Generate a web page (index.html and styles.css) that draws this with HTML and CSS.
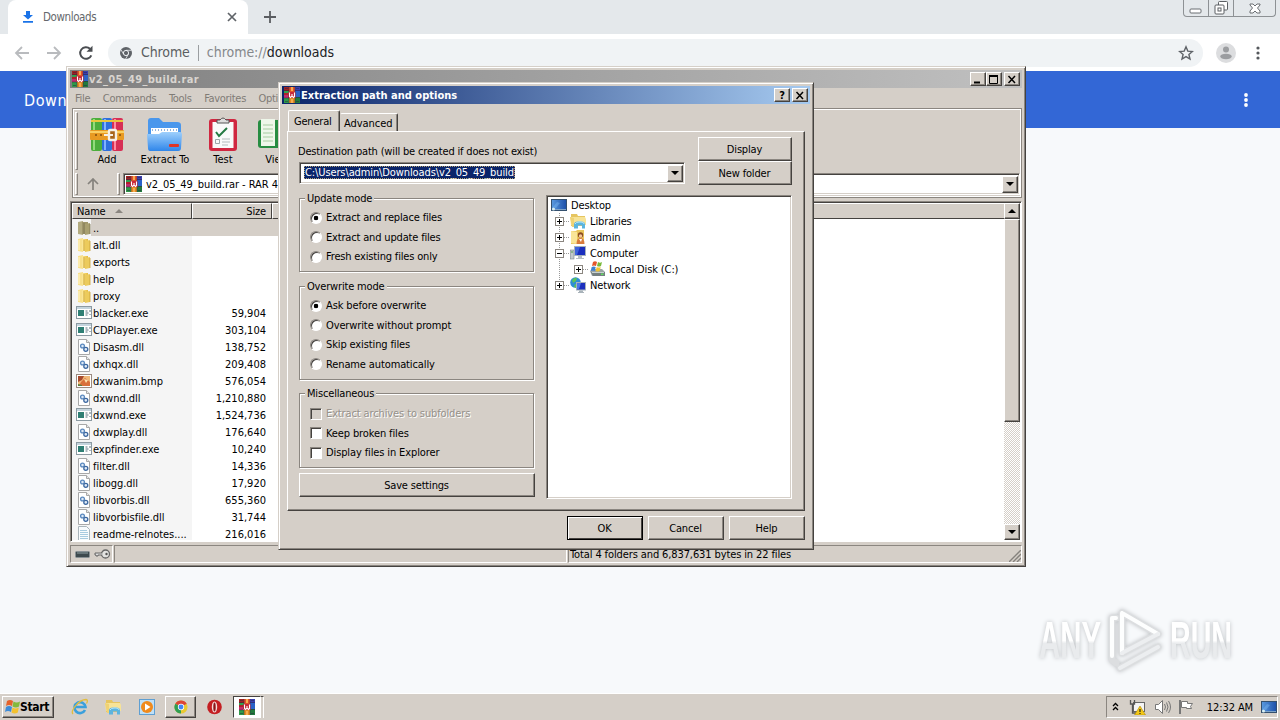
FILE: index.html
```html
<!DOCTYPE html>
<html lang="en">
<head>
<meta charset="utf-8">
<title>Downloads</title>
<link rel="stylesheet" href="styles.css">
</head>
<body>
<svg class="defs" width="0" height="0">
  <defs>
    <linearGradient id="gFold" x1="0" x2="1"><stop offset="0" stop-color="#fbe9a0"/><stop offset=".5" stop-color="#f3d469"/><stop offset="1" stop-color="#e2b73f"/></linearGradient>
    <linearGradient id="gBlue" x1="0" x2="0" y1="0" y2="1"><stop offset="0" stop-color="#9fd0fc"/><stop offset="1" stop-color="#2f86ea"/></linearGradient>
    <linearGradient id="gDesk" x1="0" x2="1"><stop offset="0" stop-color="#5b9be0"/><stop offset="1" stop-color="#1c4fa8"/></linearGradient>
    <linearGradient id="gWm" x1="0" x2="0" y1="0" y2="1"><stop offset=".5" stop-color="#ffffff"/><stop offset=".55" stop-color="#e9ebed"/></linearGradient>
  </defs>
  <symbol id="rar" viewBox="0 0 16 16">
    <rect x="0" y="0" width="5" height="7" fill="#a02222"/><rect x="5" y="0" width="6" height="7" fill="#e0502a"/><rect x="11" y="0" width="5" height="7" fill="#3a3fae"/>
    <rect x="0" y="4" width="5" height="2" fill="#30a050"/><rect x="11" y="4" width="5" height="6" fill="#2a62c8"/>
    <rect x="0" y="6" width="5" height="4" fill="#b0202a"/><rect x="0" y="8" width="4" height="3" fill="#c02a70"/>
    <rect x="0" y="11" width="5" height="5" fill="#2f9a48"/><rect x="5" y="10" width="6" height="6" fill="#e08a20"/><rect x="11" y="10" width="5" height="6" fill="#227a3c"/>
    <path d="M7 0h2v4H7zM7 12h2v4H7z" fill="#f6ac50"/><path d="M1 1.500h3M1 14.500h3M12 1.500h3M12 14.500h3M5 0v16M11 0v16M0 3.500h5M11 3.500h5M0 11h5M11 10.500h5" stroke="#2b2340" stroke-width=".7" opacity=".7"/>
    <rect x="4.500" y="5" width="7" height="6" fill="#c8283a"/><path d="M5.500 5.500v4l1 1 1.500-1.500 1.500 1.500 1-1v-4M8 7v2" stroke="#fff" stroke-width="1.100" fill="none"/>
  </symbol>
  <symbol id="folder" viewBox="0 0 16 16">
    <path d="M2 2l5-1v14l-5-1z" fill="#f8e08a"/><path d="M6 2h6v12H6z" fill="url(#gFold)"/><path d="M9 4l5-1v11l-5 1z" fill="#eccb5c"/><path d="M8 3v11M14 4v10" stroke="#c79f36" stroke-width=".8"/><path d="M3 3v10" stroke="#fff6cf"/>
  </symbol>
  <symbol id="folderdim" viewBox="0 0 16 16">
    <path d="M2 2l5-1v14l-5-1z" fill="#b3ab80"/><path d="M6 2h6v12H6z" fill="#9f966b"/><path d="M9 4l5-1v11l-5 1z" fill="#a9a070"/><path d="M8 3v11M14 4v10" stroke="#7c7550" stroke-width=".8"/>
  </symbol>
  <symbol id="exe" viewBox="0 0 16 16">
    <rect x=".5" y="1.500" width="15" height="12" fill="#fff" stroke="#8c9aa2"/><rect x="1" y="2" width="14" height="2" fill="#c4d4dd"/><rect x="2" y="5" width="6" height="6" fill="#2f7f74"/><path d="M9.500 6h2M9.500 8h3M9.500 10h2M14 5v2M14 9v1" stroke="#59707c"/>
  </symbol>
  <symbol id="dll" viewBox="0 0 16 16">
    <path d="M2.500.5h8l3 3v12h-11z" fill="#fff" stroke="#a8a8a8"/><path d="M10.500.5v3h3" fill="#e8e8e8" stroke="#a8a8a8"/><circle cx="6.500" cy="7" r="1.900" fill="#dfeaf6" stroke="#5a88be" stroke-width="1.300"/><circle cx="9.800" cy="10.300" r="2" fill="#dfeaf6" stroke="#3c68a0" stroke-width="1.300"/>
  </symbol>
  <symbol id="bmp" viewBox="0 0 16 16">
    <rect x=".5" y="1.500" width="15" height="13" fill="#fff" stroke="#9a8a80"/><rect x="2" y="3" width="12" height="10" fill="#f0b878"/><path d="M2 3h6l-2 4-4 2z" fill="#a84a2c"/><path d="M5 9l4-4 5 4v4H3z" fill="#d8703c"/><path d="M8 6l4 1-2 3z" fill="#fde2b0"/><path d="M2 11l4 1v1H2z" fill="#5d7c3a"/>
  </symbol>
  <symbol id="txt" viewBox="0 0 16 16">
    <path d="M2.500.5h8l3 3v12h-11z" fill="#f8fbfd" stroke="#a9b4ba"/><path d="M4 4.500h7M4 6.500h8M4 8.500h8M4 10.500h8M4 12.500h8" stroke="#a8cbe0"/>
  </symbol>
  <symbol id="desktop" viewBox="0 0 16 16">
    <rect x=".5" y="2.500" width="15" height="11" fill="url(#gDesk)" stroke="#34506e"/><path d="M1 12.500h14" stroke="#7fa4c8"/><path d="M2 10l4-5 3 1-4 5z" fill="#76b3ef" opacity=".5"/><circle cx="2.500" cy="12" r="1.500" fill="#d9eff3"/>
  </symbol>
  <symbol id="library" viewBox="0 0 16 16">
    <path d="M1 1h6l1 2h7v10H1z" fill="#e6c560"/><path d="M0 4h15l1 2v6H1z" fill="#f7e396"/><path d="M0 4l2 10h2V5z" fill="#efd274"/><path d="M4 15.500v-4q0-3 4-3h3q4 0 4 3v4h-3v-3H8v3z" fill="#5bb4df"/><path d="M5 11q1-2 4-2h2q3 0 3 2" stroke="#b9e6f7" fill="none"/>
  </symbol>
  <symbol id="user" viewBox="0 0 16 16">
    <path d="M1 2h5l1-1h7v14H1z" fill="#e9c65c"/><path d="M1 2l6 1v12l-6-1z" fill="#f9e598"/><circle cx="10.500" cy="6" r="2.700" fill="#8a4b22"/><circle cx="10.500" cy="7" r="1.700" fill="#f3c79a"/><path d="M6.500 15q0-6 4-6t4 6z" fill="#d87b3c"/><path d="M9 10l2 3 1-3z" fill="#fff"/>
  </symbol>
  <symbol id="computer" viewBox="0 0 16 16">
    <rect x=".5" y="5" width="3.500" height="9" fill="#c3c9cc" stroke="#7b868c" stroke-width=".6"/><path d="M1 7h2" stroke="#4c9e4c"/><rect x="4.500" y="1.500" width="11" height="9" fill="#1a2fbe" stroke="#a6b2bc"/><path d="M5 2h5l-3 8H5z" fill="#4c78e8" opacity=".7"/><path d="M8 11h4v2h2v1H6v-1h2z" fill="#b7bfc5"/>
  </symbol>
  <symbol id="disk" viewBox="0 0 16 16">
    <path d="M1 10l3-2h9l3 3v4H3z" fill="#9aa3a4"/><path d="M2 11h14v4H4z" fill="#747f80"/><path d="M3 11.500h12" stroke="#c7d0d0"/><rect x="12" y="12.500" width="2.500" height="1.500" fill="#61dd61"/><path d="M4 1q2-1.500 4 0L7 5Q5 4 3 5z" fill="#e3562b"/><path d="M9 1q2 1.300 4 0l-1 4q-2 1-4 0z" fill="#79b93b"/><path d="M2.700 6q2-1 4 0l-1 4q-2-1-4 0z" fill="#3d81d0"/><path d="M7.700 6q2 1 4 0l-1 4q-2 1-4 0z" fill="#efc231"/>
  </symbol>
  <symbol id="network" viewBox="0 0 16 16">
    <circle cx="5.500" cy="5.500" r="5.300" fill="#2f8ed4"/><path d="M2 3q3-3 5-2L6 4 3 6zM5 7l3 1-2 3-2-1z" fill="#5cc45a"/><rect x="6.500" y="5.500" width="9" height="7.500" fill="#1a2fbe" stroke="#a6b2bc"/><path d="M7 6h4l-2 6H7z" fill="#4c78e8"/><path d="M9 13.500h4V15h1v1H8v-1h1z" fill="#a9b3ba"/>
  </symbol>
</svg>

<main class="screen">
  <section class="browser">
    <div class="tabstrip">
      <div class="tab">
        <svg width="12" height="14" viewBox="0 0 12 14"><path d="M4 1h4v4h3L6 9.500 1 5h3zM1 11h10v1.800H1z" fill="#1a73e8"/></svg>
        <span class="tab-title">Downloads</span>
        <svg width="10" height="10" viewBox="0 0 10 10"><path d="M1 1l8 8M9 1l-8 8" stroke="#5f6368" stroke-width="1.700"/></svg>
      </div>
      <svg class="newtab" width="12" height="12" viewBox="0 0 12 12"><path d="M6 0v12M0 6h12" stroke="#5a5d61" stroke-width="1.800"/></svg>
      <div class="winctl">
        <span><svg width="14" height="14" viewBox="0 0 14 14"><rect x="1" y="8" width="11" height="4" rx="1" fill="#fff" stroke="#6b6f73"/></svg></span>
        <span><svg width="14" height="14" viewBox="0 0 14 14"><rect x="4.500" y=".5" width="9" height="8.500" rx="1" fill="#fff" stroke="#5b5f63"/><rect x="1" y="4" width="9" height="9" rx="1" fill="#fff" stroke="#5b5f63"/><rect x="4" y="7" width="3" height="3" fill="none" stroke="#5b5f63"/></svg></span>
        <span class="wide"><svg width="14" height="14" viewBox="0 0 14 14"><path d="M2 3h3l2 2 2-2h3v1L9.500 7l2.500 3v2H9L7 10l-2 2H2v-2l2.500-3L2 4z" fill="#fff" stroke="#6b6f73"/></svg></span>
      </div>
    </div>
    <div class="navbar">
      <svg class="nav" width="16" height="14" viewBox="0 0 16 14"><path d="M15 7H2M8 1L2 7l6 6" fill="none" stroke="#b9bbbe" stroke-width="1.800"/></svg>
      <svg class="nav" width="16" height="14" viewBox="0 0 16 14"><path d="M1 7h13M8 1l6 6-6 6" fill="none" stroke="#b9bbbe" stroke-width="1.800"/></svg>
      <svg class="nav" width="16" height="16" viewBox="0 0 16 16"><path d="M13.300 10.300A5.800 5.800 0 1 1 12 3.800" fill="none" stroke="#4a4d51" stroke-width="2"/><path d="M14.500.8v6h-6z" fill="#4a4d51"/></svg>
      <div class="omnibox">
        <svg width="12" height="12" viewBox="0 0 12 12"><circle cx="6" cy="6" r="6" fill="#5f6368"/><circle cx="6" cy="6" r="2.600" fill="#5f6368" stroke="#f0f3f5" stroke-width="1"/><path d="M6 3.300h5.500M3.700 7.300L1 2.800M8.300 7.300L5.600 12" stroke="#f0f3f5" stroke-width=".8"/></svg>
        <span class="site">Chrome</span><i class="bar"></i><span class="url">chrome://<b>downloads</b></span>
        <svg class="star" width="16" height="16" viewBox="0 0 16 16"><path d="M8 1.800l1.800 4.300 4.600.4-3.500 3 1.100 4.500L8 11.600 4 14l1.100-4.500-3.500-3 4.600-.4z" fill="none" stroke="#5f6368" stroke-width="1.400"/></svg>
      </div>
      <svg class="avatar" width="20" height="20" viewBox="0 0 20 20"><circle cx="10" cy="10" r="10" fill="#dcdddf"/><circle cx="10" cy="6.500" r="3" fill="#9b9da0"/><ellipse cx="10" cy="13.500" rx="5.700" ry="2.700" fill="#9b9da0"/></svg>
      <svg width="4" height="14" viewBox="0 0 4 14"><g fill="#55585c"><circle cx="2" cy="2" r="1.600"/><circle cx="2" cy="7" r="1.600"/><circle cx="2" cy="12" r="1.600"/></g></svg>
    </div>
    <div class="pagehead"><span>Downloads</span><svg width="4" height="14" viewBox="0 0 4 14"><g fill="#fff"><circle cx="2" cy="2" r="1.900"/><circle cx="2" cy="7" r="1.900"/><circle cx="2" cy="12" r="1.900"/></g></svg></div>
    <div class="page"></div>
  </section>

  <svg class="watermark" width="220" height="74" viewBox="0 0 220 74">
    <g class="wm-text"><text x="3" y="52" textLength="62" lengthAdjust="spacingAndGlyphs">ANY</text><text x="134" y="52" textLength="62" lengthAdjust="spacingAndGlyphs">RUN</text></g>
    <g fill="none" stroke-linejoin="round" stroke-linecap="round">
      <g stroke="#dcdee0" stroke-width="7"><path d="M80 12h-4v42l4 3M86 7v40L122 28 86 7M84 62l38-21"/></g>
      <g stroke="#fdfefe" stroke-width="4"><path d="M80 12h-4v38M86 7v40M86 7l36 21"/></g>
      <g stroke="#eceef0" stroke-width="4"><path d="M86 47l36-19M84 62l38-21"/></g>
    </g>
  </svg>

  <section class="win rar">
    <div class="title inactive"><svg width="16" height="16"><use href="#rar"/></svg><b>v2_05_49_build.rar</b>
      <div class="caps"><span class="cap"><svg width="10" height="9"><path d="M1 7.500h6" stroke="#000" stroke-width="2"/></svg></span><span class="cap"><svg width="10" height="9"><path d="M.5 0v8.500h8V0M0 1h9" stroke="#000" fill="none"/><path d="M0 1h9" stroke="#000" stroke-width="2"/></svg></span><span class="cap gap"><svg width="10" height="9"><path d="M1.500 1l6.500 7M8 1L1.500 8" stroke="#000" stroke-width="1.500"/></svg></span></div>
    </div>
    <nav class="menu"><span>File</span><span>Commands</span><span>Tools</span><span>Favorites</span><span>Options</span></nav>
    <div class="bars">
      <div class="tools">
        <i class="grip"></i>
        <div class="tool t1"><svg width="36" height="36" viewBox="0 0 36 36"><g><rect x="2" y="2" width="11" height="33" rx="2" fill="#4cae3c"/><rect x="13" y="2" width="10" height="33" rx="2" fill="#2f70dc"/><rect x="23" y="2" width="11" height="33" rx="2" fill="#d72f55"/><path d="M5 3v31" stroke="#92db7c" stroke-width="2"/><path d="M16 3v31" stroke="#7fb2ff" stroke-width="2"/><path d="M26 3v31" stroke="#ff8aa0" stroke-width="2"/><path d="M2 5h11M13 5h10M23 5h11" stroke="#e8c63c" stroke-width="2"/><rect x="1" y="14" width="34" height="10" rx="1" fill="#e89a22"/><path d="M1 16h34" stroke="#f9cf62" stroke-width="2"/><rect x="20" y="14" width="7" height="10" rx="1" fill="#a8641a" stroke="#f4f0e8" stroke-width="2.400"/><path d="M15 19h9" stroke="#f4f0e8" stroke-width="2"/><circle cx="7" cy="19" r="1" fill="#7d4b12"/><circle cx="12" cy="19" r="1" fill="#7d4b12"/><circle cx="31" cy="19" r="1" fill="#7d4b12"/></g></svg><span>Add</span></div>
        <div class="tool t2"><svg width="38" height="36" viewBox="0 0 38 36"><path d="M2 5q0-3 3-3h8l4 4h14q4 0 4 3v12H2z" fill="#4a97ec"/><path d="M5 12h27v12H5z" fill="#fff"/><path d="M6 14h25" stroke="#8fb4e0" stroke-dasharray="1 2" stroke-width="2"/><path d="M1 18h12l3-2h18q2 0 2 2l-1 14q0 3-3 3H4q-2 0-2-3z" fill="url(#gBlue)"/><rect x="23" y="28" width="10" height="3" rx="1" fill="#df3527"/></svg><span>Extract To</span></div>
        <div class="tool t3"><svg width="30" height="36" viewBox="0 0 30 36"><rect x="1" y="3" width="28" height="32" rx="3" fill="#d02740"/><rect x="4.500" y="6" width="21" height="26" fill="#f9fafa"/><path d="M9 7V4h3q3-4 6 0h3v3z" fill="#dedede" stroke="#555"/><path d="M8 16l3 4 8-8" fill="none" stroke="#247a43" stroke-width="2"/><path d="M7.500 23.500h4v4h-4z" fill="none" stroke="#9ca6a8"/><path d="M14 23h8M14 26h8M14 29h6" stroke="#b4bcbe"/></svg><span>Test</span></div>
        <div class="tool t4"><svg width="36" height="36" viewBox="0 0 36 36"><rect x="1" y="4" width="34" height="28" rx="3" fill="#278d42"/><rect x="4" y="3" width="14" height="27" fill="#eef7ea"/><path d="M6 9h10M6 13h10M6 17h10M6 21h10M6 25h10" stroke="#a6cda2"/></svg><span>View</span></div>
      </div>
      <div class="addr">
        <i class="grip"></i>
        <svg class="up" width="14" height="12" viewBox="0 0 14 12"><path d="M7 12V2M2 6l5-5 5 5" fill="none" stroke="#85827d" stroke-width="1.700"/></svg>
        <i class="grip"></i>
        <div class="combo"><svg width="16" height="16"><use href="#rar"/></svg><span>v2_05_49_build.rar - RAR 4.x archive, unpacked size 6,837,631 bytes</span><em class="drop"></em></div>
      </div>
    </div>
    <div class="list">
      <div class="listmain">
        <div class="thead"><span class="c1">Name<i class="asc"></i></span><span class="c2">Size</span><span class="c3"></span></div>
        <div class="rows">
          <div class="row sel"><svg><use href="#folderdim"/></svg><span>..</span><em></em></div>
          <div class="row"><svg><use href="#folder"/></svg><span>alt.dll</span><em></em></div>
          <div class="row"><svg><use href="#folder"/></svg><span>exports</span><em></em></div>
          <div class="row"><svg><use href="#folder"/></svg><span>help</span><em></em></div>
          <div class="row"><svg><use href="#folder"/></svg><span>proxy</span><em></em></div>
          <div class="row"><svg><use href="#exe"/></svg><span>blacker.exe</span><em>59,904</em></div>
          <div class="row"><svg><use href="#exe"/></svg><span>CDPlayer.exe</span><em>303,104</em></div>
          <div class="row"><svg><use href="#dll"/></svg><span>Disasm.dll</span><em>138,752</em></div>
          <div class="row"><svg><use href="#dll"/></svg><span>dxhqx.dll</span><em>209,408</em></div>
          <div class="row"><svg><use href="#bmp"/></svg><span>dxwanim.bmp</span><em>576,054</em></div>
          <div class="row"><svg><use href="#dll"/></svg><span>dxwnd.dll</span><em>1,210,880</em></div>
          <div class="row"><svg><use href="#exe"/></svg><span>dxwnd.exe</span><em>1,524,736</em></div>
          <div class="row"><svg><use href="#dll"/></svg><span>dxwplay.dll</span><em>176,640</em></div>
          <div class="row"><svg><use href="#exe"/></svg><span>expfinder.exe</span><em>10,240</em></div>
          <div class="row"><svg><use href="#dll"/></svg><span>filter.dll</span><em>14,336</em></div>
          <div class="row"><svg><use href="#dll"/></svg><span>libogg.dll</span><em>17,920</em></div>
          <div class="row"><svg><use href="#dll"/></svg><span>libvorbis.dll</span><em>655,360</em></div>
          <div class="row"><svg><use href="#dll"/></svg><span>libvorbisfile.dll</span><em>31,744</em></div>
          <div class="row"><svg><use href="#txt"/></svg><span>readme-relnotes....</span><em>216,016</em></div>
        </div>
      </div>
      <div class="scroll"><i class="sbtn upb"></i><i class="thumb"></i><i class="sbtn downb"></i></div>
    </div>
    <div class="status">
      <div class="s1"><svg width="15" height="7" viewBox="0 0 15 7"><rect x=".5" y=".5" width="14" height="6" rx="1" fill="#3e4a4e" stroke="#8a9296"/><path d="M2 2h11" stroke="#8fa0a4"/></svg><svg width="17" height="10" viewBox="0 0 17 10"><circle cx="11.500" cy="5" r="4" fill="#e3e3e1" stroke="#666" stroke-width="1.300"/><path d="M8 4H1v2h1v1h2V6h4" fill="#ddd" stroke="#666"/><circle cx="12.500" cy="5" r="1.200" fill="#555"/></svg></div>
      <div class="s2"></div>
      <div class="s3"><span>Total 4 folders and 6,837,631 bytes in 22 files</span><svg width="12" height="12" viewBox="0 0 12 12"><path d="M0 12L12 0M4 12l8-8M8 12l4-4" stroke="#85827d" stroke-width="1.400"/></svg></div>
    </div>
  </section>

  <section class="win dialog">
    <div class="title active"><svg width="16" height="16"><use href="#rar"/></svg><b>Extraction path and options</b>
      <div class="caps"><span class="cap qm">?</span><span class="cap gap"><svg width="10" height="9"><path d="M1.500 1l6.500 7M8 1L1.500 8" stroke="#000" stroke-width="1.500"/></svg></span></div>
    </div>
    <div class="tabs"><span class="dtab on">General</span><span class="dtab">Advanced</span></div>
    <div class="panel">
      <div class="dest">
        <div class="destl"><label>Destination path (will be created if does not exist)</label>
          <div class="combo"><span class="hl">C:\Users\admin\Downloads\v2_05_49_build</span><em class="drop"></em></div></div>
        <div class="destr"><span class="btn">Display</span><span class="btn">New folder</span></div>
      </div>
      <div class="cols">
        <div class="left">
          <div class="group g1"><h4>Update mode</h4><p><i class="radio on"></i><span>Extract and replace files</span></p><p><i class="radio"></i><span>Extract and update files</span></p><p><i class="radio"></i><span>Fresh existing files only</span></p></div>
          <div class="group g2"><h4>Overwrite mode</h4><p><i class="radio on"></i><span>Ask before overwrite</span></p><p><i class="radio"></i><span>Overwrite without prompt</span></p><p><i class="radio"></i><span>Skip existing files</span></p><p><i class="radio"></i><span>Rename automatically</span></p></div>
          <div class="group g3"><h4>Miscellaneous</h4><p class="off"><i class="check"></i><span>Extract archives to subfolders</span></p><p><i class="check"></i><span>Keep broken files</span></p><p><i class="check"></i><span>Display files in Explorer</span></p></div>
          <span class="btn save">Save settings</span>
        </div>
        <div class="tree">
          <div class="node root"><svg><use href="#desktop"/></svg><span>Desktop</span></div>
          <div class="node"><i class="pm plus"></i><svg><use href="#library"/></svg><span>Libraries</span></div>
          <div class="node"><i class="pm plus"></i><svg><use href="#user"/></svg><span>admin</span></div>
          <div class="node"><i class="pm"></i><svg><use href="#computer"/></svg><span>Computer</span></div>
          <div class="node sub"><i class="pm plus"></i><svg><use href="#disk"/></svg><span>Local Disk (C:)</span></div>
          <div class="node last"><i class="pm plus"></i><svg><use href="#network"/></svg><span>Network</span></div>
        </div>
      </div>
    </div>
    <div class="foot"><span class="btn def">OK</span><span class="btn">Cancel</span><span class="btn">Help</span></div>
  </section>

  <footer class="taskbar">
    <div class="start"><svg width="17" height="16" viewBox="0 0 17 16"><path d="M3 2q3-2 6 0L8 7Q5 5 2 7z" fill="#e5622b"/><path d="M9.500 2.500q3 2 6.500 0L15 7.500q-3 2-6.500 0z" fill="#83b93c"/><path d="M2 8q3-2 6 0l-1 5q-3-2-6 0z" fill="#3c8bd8"/><path d="M8.500 8.500q3 2 6.300 0l-1 5q-3 2-6.300 0z" fill="#f3c12f"/></svg><b>Start</b></div>
    <svg class="q ie" width="18" height="18" viewBox="0 0 18 18"><path d="M14 12A5.500 5.500 0 1 1 14.500 9H4" fill="none" stroke="#3ba0dc" stroke-width="2.600"/><path d="M2 16C-1 13 8 1.500 15 1.500q2.500.5.500 4" fill="none" stroke="#e2bd3e" stroke-width="1.300"/></svg>
    <svg class="q ex" width="16" height="16" viewBox="0 0 16 16"><use href="#library"/></svg>
    <svg class="q wmp" width="16" height="16" viewBox="0 0 16 16"><rect x=".5" y=".5" width="15" height="15" fill="#bfe0f7" stroke="#5f9fd2"/><circle cx="8" cy="8" r="6" fill="#f08a1c"/><path d="M6 4.500l5.500 3.500L6 11.500z" fill="#fff"/></svg>
    <div class="task"><svg width="14" height="14" viewBox="0 0 16 16"><circle cx="8" cy="8" r="7.500" fill="#e9c931"/><path d="M8 8L1.500 4.200A7.500 7.500 0 0 1 14.500 4.200z" fill="#dc4437"/><path d="M1.500 4.200L8 8v7.500A7.500 7.500 0 0 1 1.500 4.200z" fill="#2f9e52"/><circle cx="8" cy="8" r="3.600" fill="#fff"/><circle cx="8" cy="8" r="2.800" fill="#4285f4"/></svg></div>
    <svg class="q op" width="15" height="16" viewBox="0 0 15 16"><circle cx="7.500" cy="8" r="7.300" fill="#c41e22"/><ellipse cx="7.500" cy="8" rx="2.700" ry="5.500" fill="#f5dcdc"/><ellipse cx="7.500" cy="8" rx="1.200" ry="4.500" fill="#8c1418"/></svg>
    <div class="task down"><svg width="16" height="16"><use href="#rar"/></svg></div><i class="stack"></i>
    <div class="tray">
      <svg width="7" height="10" viewBox="0 0 7 10"><path d="M1 4l2.500-2.500L6 4M1 8l2.500-2.500L6 8" fill="none" stroke="#000" stroke-width="1.300"/></svg>
      <svg class="net" width="17" height="16" viewBox="0 0 17 16"><rect x="4.500" y="3.500" width="11" height="9" fill="#f4f4f4" stroke="#666"/><path d="M1.500 1v4h4V1M3.500 5v9h4" fill="none" stroke="#555" stroke-width="1.300"/><path d="M11 7l5.500 9h-11z" fill="#f4c816" stroke="#b28c08" stroke-width=".6"/><path d="M11 10v3M11 14v1" stroke="#222" stroke-width="1.200"/></svg>
      <svg class="vol" width="17" height="16" viewBox="0 0 17 16"><path d="M1.500 5.500h3l4-4v13l-4-4h-3z" fill="#fff" stroke="#777"/><path d="M10.500 5q2 3 0 6M12.500 3.500q3 4.500 0 9M14.500 2q4 6 0 12" fill="none" stroke="#777"/></svg>
      <svg class="flag" width="16" height="16" viewBox="0 0 16 16"><path d="M2 1v14" stroke="#777" stroke-width="2"/><path d="M3.500 2.500h6v2h5l-2 3 1 2h-5v-1h-5z" fill="#fff" stroke="#777"/></svg>
      <span class="clock">12:32 AM</span>
      <svg width="16" height="16" viewBox="0 0 16 16"><use href="#desktop"/></svg>
    </div>
  </footer>
</main>
</body>
</html>
```
FILE: styles.css
```css
* { box-sizing: border-box; }
body { margin: 0; font: 11px/13px "DejaVu Sans Condensed", "DejaVu Sans", sans-serif; font-stretch: condensed; color: #000; letter-spacing: -.17px; }
i, em { font-style: normal; display: block; flex: none; }
svg { display: block; flex: none; }
span { white-space: nowrap; }
.defs { position: absolute; }
.screen { position: relative; width: 1280px; height: 720px; overflow: hidden; display: flex; flex-direction: column; background: #f7f9fb; }

/* Browser */
.browser { display: flex; flex-direction: column; height: 693px; }
.tabstrip { height: 34px; background: #e4e8eb; display: flex; align-items: flex-start; padding-left: 8px; }
.tab { width: 240px; height: 34px; background: #fff; border-radius: 8px 8px 0 0; display: flex; align-items: center; padding: 0 11px 0 14px; }
.tab-title { flex: 1; margin-left: 9px; font-size: 11.500px; letter-spacing: -.4px; color: #65686c; }
.newtab { margin: 11px 0 0 16px; }
.winctl { margin-left: auto; margin-right: 4px; display: flex; width: 93px; height: 17px; border: 1px solid #8d9194; border-top: 0; border-radius: 0 0 4px 4px; }
.winctl span { width: 25px; display: flex; justify-content: center; align-items: center; border-right: 1px solid #8d9194; }
.winctl .wide { flex: 1; border-right: 0; }
.navbar { height: 37px; background: #fff; display: flex; align-items: center; padding: 0 20px 0 14px; }
.nav { margin-right: 16px; }
.omnibox { width: 1096px; height: 28px; margin-left: -2px; border-radius: 14px; background: #f0f3f5; display: flex; align-items: center; padding: 0 9px 0 12px; font-size: 14px; line-height: 20px; }
.site { margin-left: 9px; padding-bottom: 1px; color: #5b5e61; letter-spacing: -.1px; }
.bar { width: 1px; height: 16px; background: #9b9ea1; margin: 0 8px; }
.url { padding-bottom: 1px; color: #85888b; letter-spacing: -.03px; }
.url b { font-weight: 400; color: #202124; }
.star { margin-left: auto; }
.avatar { margin: 0 20px 0 13px; }
.pagehead { height: 57px; background: #3367d6; color: #fff; display: flex; align-items: center; justify-content: space-between; padding: 1px 32px 0 24px; font-size: 16px; letter-spacing: .6px; }
.page { flex: 1; background: #f7f9fb; }
.watermark { position: absolute; left: 1036px; top: 606px; overflow: visible; filter: drop-shadow(0 0 2px #bdc0c3); }
.wm-text { font: 700 51px "Liberation Sans", sans-serif; letter-spacing: 0; fill: url(#gWm); }

/* Windows */
.win { position: absolute; background: #d5cfc8; border: 1px solid; border-color: #d5cfc8 #45423f #45423f #d5cfc8; box-shadow: inset 1px 1px #fff, inset -1px -1px #8b8680; padding: 3px; display: flex; flex-direction: column; }
.rar { left: 66px; top: 66px; width: 960px; height: 501px; }
.dialog { left: 278px; top: 82px; width: 536px; height: 468px; }
.title { height: 18px; display: flex; align-items: center; padding: 0 2px; color: #fff; flex: none; }
.title b { margin-left: 1px; letter-spacing: .02px; }
.inactive { background: linear-gradient(90deg, #808080, #c0c0c0); }
.inactive b { color: #d9d5d0; letter-spacing: .33px; }
.active { background: linear-gradient(90deg, #0a246a, #a6caf0); }
.caps { margin-left: auto; display: flex; }
.cap { width: 16px; height: 14px; display: flex; align-items: center; justify-content: center; font-weight: 700; color: #000; }
.cap.gap { margin-left: 2px; }
.cap, .btn, .drop, .sbtn, .thumb, .start, .task { background: #d5cfc8; border: 1px solid; border-color: #fff #45423f #45423f #fff; box-shadow: inset -1px -1px #8b8680; }
.btn { display: flex; align-items: center; justify-content: center; height: 24px; padding-right: 1px; }

.menu { height: 20px; display: flex; align-items: center; gap: 12.500px; padding-left: 5px; color: #807b76; letter-spacing: -.3px; flex: none; }
.bars { height: 90px; margin-left: 2px; border: 1px solid #8b8680; box-shadow: inset 1px 1px #fff, inset -1px -1px #fff; flex: none; padding: 3px 1px 3px 2px; }
.grip { width: 3px; border: 1px solid; border-color: #fff #8b8680 #8b8680 #fff; }
.tools { display: flex; height: 60px; }
.tools .grip { height: 58px; }
.tool { display: flex; flex-direction: column; align-items: center; padding-top: 4px; flex: none; }
.tool span { margin-top: 1px; letter-spacing: 0; }
.t1 { width: 58px; }
.t2 { width: 58px; }
.t3 { width: 58px; }
.t4 { width: 50px; }
.t4 svg { margin-left: -4px; }
.addr { display: flex; height: 22px; margin-top: 1px; }
.addr .up { margin: 5px 17px 0 8px; }
.combo { background: #fff; border: 1px solid; border-color: #8b8680 #fff #fff #8b8680; box-shadow: inset 1px 1px #45423f, inset -1px -1px #d5cfc8; display: flex; align-items: center; height: 22px; padding: 2px 1px 2px 2px; }
.addr .combo { flex: 1; margin-left: 3px; }
.addr .combo span { margin: 1px 0 0 4px; flex: 1; letter-spacing: -.05px; }
.drop { width: 16px; height: 17px; position: relative; margin-left: auto; }
.drop::after, .sbtn::after { content: ""; position: absolute; left: 3px; top: 5px; border: 4px solid transparent; border-top-color: #000; border-bottom: 0; }

.list { height: 341px; margin: 3px 0 0; border: 1px solid; border-color: #8b8680 #fff #fff #8b8680; box-shadow: inset 1px 1px #45423f; padding: 1px; display: flex; background: #fff; flex: none; overflow: hidden; }
.listmain { flex: 1; min-width: 0; overflow: hidden; }
.thead { display: flex; height: 16px; background: #d5cfc8; }
.thead span { border: 1px solid; border-color: #fff #45423f #45423f #fff; display: flex; align-items: center; flex: none; }
.thead .c1 { width: 120px; padding-left: 4px; }
.thead .c2 { width: 80px; justify-content: flex-end; padding-right: 5px; }
.thead .c3 { flex: 1; border-right: 0; }
.asc { margin-left: 9px; border: 4px solid transparent; border-bottom-color: #8b8680; border-top: 0; }
.rows { height: 322px; overflow: hidden; background: linear-gradient(90deg, #f5f5f5 120px, #fff 120px); }
.row { height: 17px; width: 220px; display: flex; align-items: center; padding-left: 4px; }
.row svg { width: 16px; height: 16px; }
.row span { width: 99px; margin-left: 1px; padding-top: 1px; letter-spacing: -.03px; }
.row em { width: 74px; padding-top: 1px; text-align: right; letter-spacing: 0; }
.row.sel { background: linear-gradient(90deg, #f5f5f5 19px, #d5cfc8 19px); }
.scroll { width: 16px; display: flex; flex-direction: column; background: repeating-conic-gradient(#fff 0 25%, #d5cfc8 0 50%) 0 0 / 2px 2px; }
.sbtn { height: 16px; position: relative; flex: none; }
.upb::after { border: 4px solid transparent; border-bottom-color: #000; border-top: 0; }
.thumb { height: 203px; }
.downb { margin-top: auto; }
.status { display: flex; height: 18px; margin-top: 3px; flex: none; }
.status > div { border: 1px solid; border-color: #8b8680 #fff #fff #8b8680; display: flex; align-items: center; }
.s1 { width: 43px; gap: 4px; padding-left: 4px; }
.s2 { width: 453px; margin-left: 1px; }
.status .s3 { flex: 1; margin-left: 1px; padding-left: 1px; justify-content: space-between; align-items: flex-end; letter-spacing: -.11px; }
.s3 span { padding-bottom: 1px; }

/* Extraction dialog */
.tabs { display: flex; align-items: flex-end; height: 27px; padding-left: 6px; flex: none; }
.dtab { height: 18px; width: 58px; border: 1px solid; border-color: #fff #45423f transparent transparent; border-bottom: 0; border-radius: 2px 2px 0 0; box-shadow: inset -1px 0 #8b8680; padding: 3px 0 0 3px; letter-spacing: -.05px; }
.dtab.on { width: 52px; height: 21px; border-left-color: #fff; padding: 4px 0 0 5px; letter-spacing: -.2px; }
.panel { width: 518px; height: 380px; margin-left: 5px; border: 1px solid; border-color: #fff #45423f #45423f #fff; box-shadow: inset -1px -1px #8b8680; padding: 5px 12px 0 11px; flex: none; }
.dest { display: flex; justify-content: space-between; height: 49px; }
.destl { width: 386px; display: flex; flex-direction: column; padding-top: 8px; gap: 4px; }
.destl label { margin-left: -1px; }
.hl { background: #0a246a; color: #fff; margin: 0 0 1px 2px; padding: 0 1px; line-height: 13px; letter-spacing: -.11px; outline: 1px dotted #b0a070; outline-offset: -1px; }
.destr { width: 94px; }
.destr .btn { height: 24px; }
.cols { display: flex; justify-content: space-between; margin-top: 9px; }
.left { width: 236px; padding-top: 3px; }
.group { border: 1px solid #8b8680; box-shadow: 1px 1px #fff, inset 1px 1px #fff; width: 235px; padding: 9px 0 0 10px; position: relative; }
.group h4 { font: inherit; margin: 0; position: absolute; top: -7px; left: 5px; background: #d5cfc8; padding: 0 2px; }
.g1 { height: 74px; }
.g2 { height: 94px; margin-top: 14px; }
.g3 { height: 75px; margin-top: 13px; padding-top: 10px; }
.group p { margin: 0; height: 19.500px; display: flex; align-items: center; gap: 4px; }
.radio, .check { width: 12px; height: 12px; background: #fff; border: 1px solid; border-color: #8b8680 #fff #fff #8b8680; box-shadow: inset 1px 1px #45423f; }
.radio { border-radius: 50%; }
.radio.on { background: radial-gradient(circle, #000 2px, #fff 2.600px); }
.g2 p, .g3 p { letter-spacing: -.12px; }
.off { color: #96918b; text-shadow: 1px 1px #fff; }
.off .check { background: #d5cfc8; }
.save { width: 236px; margin-top: 5px; }
.tree { width: 246px; height: 304px; background: #fff; border: 1px solid; border-color: #8b8680 #fff #fff #8b8680; box-shadow: inset 1px 1px #45423f, inset -1px -1px #d5cfc8; padding: 1px 0 0 4px; }
.node { height: 16px; display: flex; align-items: center; padding-left: 4px; background: repeating-linear-gradient(#999 0 1px, #fff 1px 2px) 8px 0 / 1px 100% no-repeat, repeating-linear-gradient(90deg, #999 0 1px, #fff 1px 2px) 13px 8px / 6px 1px no-repeat; }
.node.root { padding-left: 0; background: none; }
.node.sub { padding-left: 23px; background: repeating-linear-gradient(#999 0 1px, #fff 1px 2px) 8px 0 / 1px 100% no-repeat, repeating-linear-gradient(90deg, #999 0 1px, #fff 1px 2px) 32px 8px / 6px 1px no-repeat; }
.node.last { background-size: 1px 50%, 6px 1px; }
.node svg { width: 16px; height: 16px; }
.node span { margin-left: 4px; letter-spacing: -.12px; }
.pm { width: 9px; height: 9px; border: 1px solid #8b8680; margin-right: 6px; background: linear-gradient(#000, #000) center / 5px 1px no-repeat, #fff; }
.pm.plus { background: linear-gradient(#000, #000) center / 5px 1px no-repeat, linear-gradient(#000, #000) center / 1px 5px no-repeat, #fff; }
.foot { display: flex; justify-content: flex-end; gap: 5px; padding: 5px 5px 0 0; }
.foot .btn { width: 76px; }
.foot .def { outline: 1px solid #000; outline-offset: -1px; border-color: #000; box-shadow: inset 1px 1px #fff, inset -1px -1px #45423f; }

/* Taskbar */
.taskbar { height: 27px; background: #d5cfc8; box-shadow: inset 0 1px #fff; display: flex; align-items: center; padding: 2px 2px 1px 2px; }
.start { width: 52px; height: 22px; display: flex; align-items: center; padding-left: 1px; font-size: 12px; letter-spacing: -.3px; }
.start b { margin-left: -1px; }
.q.ie { margin-left: 17px; }
.q.ex { margin-left: 16px; }
.q.wmp { margin-left: 18px; }
.task { width: 31px; height: 22px; margin-left: 10px; display: flex; align-items: center; justify-content: center; }
.q.op { margin-left: 11px; }
.task.down { background: #fff; border-color: #45423f #fff #fff #45423f; box-shadow: none; width: 28px; margin-left: 11px; }
.stack { width: 3px; height: 22px; border-right: 1px solid #fff; border-top: 1px solid #45423f; }
.tray { margin-left: auto; width: 172px; height: 22px; border: 1px solid; border-color: #8b8680 #fff #fff #8b8680; display: flex; align-items: center; padding-left: 5px; }
.net { margin-left: 10px; }
.vol { margin-left: 8px; }
.flag { margin-left: 7px; }
.clock { margin: 0 8px 0 auto; letter-spacing: -.1px; }
```
